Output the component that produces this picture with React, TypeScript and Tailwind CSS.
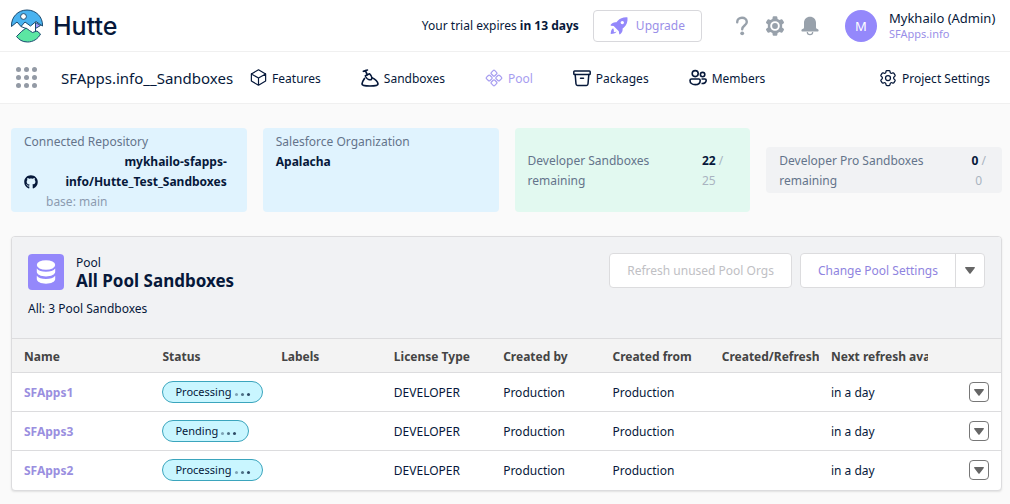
import type { ReactNode } from "react";
import { FaGithub } from "react-icons/fa";
import { HiOutlineCog6Tooth, HiOutlineCube } from "react-icons/hi2";

type Sandbox = { name: string; status: string };

const sandboxes: Sandbox[] = [
  { name: "SFApps1", status: "Processing" },
  { name: "SFApps3", status: "Pending" },
  { name: "SFApps2", status: "Processing" },
];

const columns = [
  { label: "Name", width: "w-[14%]" },
  { label: "Status", width: "w-[12%]" },
  { label: "Labels", width: "w-[11.4%]" },
  { label: "License Type", width: "w-[11.05%]" },
  { label: "Created by", width: "w-[11.05%]" },
  { label: "Created from", width: "w-[11.05%]" },
  { label: "Created/Refreshed", width: "w-[11.05%]" },
  { label: "Next refresh available", width: "w-[11.05%]" },
];

function Logo() {
  return (
    <svg width="34" height="34" viewBox="0 0 34 34" fill="none" stroke="#1a4a70" strokeWidth="1" strokeLinejoin="round">
      <path d="M1.500 17.500C1 8 8 1 17 1s16 7 15.500 16L26 12.500 20.500 17l-5.500-4-4 4.500-4-4.500Z" fill="#4ab3f0" />
      <path d="M6.500 27.500 11.500 22.500 16 19l3.500 2.500 3 2 4.500-1.500 3.500 3C28 30 23 33 17.500 33S9 30.500 6.500 27.500Z" fill="#5ce6a3" />
      <path d="m11 17.500 5 2M25.500 22V14" />
      <path d="m25.500 13.500 5 3-5 3Z" fill="#a49aff" />
      <circle cx="13.500" cy="7.500" r="2.900" fill="#fff" />
    </svg>
  );
}

function RocketIcon() {
  return (
    <svg width="18" height="18" viewBox="0 0 18 18" fill="currentColor">
      <path fillRule="evenodd" d="M17.500.4c.3 4.200-.8 7.500-3.600 10.100l-1.300 1.100c.2 2.500-.5 4.400-2.500 5.700-.5.300-.8 0-.9-.5l-.4-2.600-5.100-5.100L1.100 8.700c-.5-.1-.7-.5-.4-.9 1.300-2 3.200-2.800 5.700-2.500l1.100-1.300C10.100 1.200 13.300.100 17.500.400ZM12.300 3.900a1.700 1.700 0 1 0 0 3.400 1.700 1.700 0 0 0 0-3.400Z" />
      <path d="M3.200 11.300c-1.700.6-2.400 2.700-2.500 5.800 3.200-.1 5.300-.8 5.900-2.500-.9.500-1.900.6-2.800.6.100-1 .2-2-.6-3.900Z" />
    </svg>
  );
}

function QuestionIcon() {
  return (
    <svg width="14" height="20" viewBox="0 0 14 20" fill="none">
      <path d="M2.200 6.200C2.200 3.400 4.300 1.700 7 1.700s4.800 1.700 4.800 4.200c0 3.600-4.600 3.500-4.600 7.300" stroke="currentColor" strokeWidth="2.400" strokeLinecap="round" />
      <circle cx="7.200" cy="17.300" r="1.900" fill="currentColor" />
    </svg>
  );
}

function GearIcon() {
  return (
    <svg width="20" height="20" viewBox="0 0 20 20" fill="currentColor">
      <path
        fillRule="evenodd"
        d="M8.600.2h2.800c.5 0 .8.300.9.800l.3 2c.7.200 1.300.6 1.900 1l1.900-.7c.4-.2.900 0 1.100.4l1.400 2.400c.2.400.1.900-.2 1.200l-1.600 1.300c.1.900.1 1.900 0 2.800l1.600 1.300c.3.300.4.800.2 1.200l-1.400 2.400c-.2.400-.7.600-1.100.4l-1.900-.7c-.6.400-1.200.8-1.900 1l-.3 2c-.1.500-.4.800-.9.800H8.600c-.5 0-.8-.3-.9-.8l-.3-2c-.7-.2-1.300-.6-1.900-1l-1.900.7c-.4.200-.9 0-1.100-.4l-1.400-2.400c-.2-.4-.1-.9.200-1.200l1.600-1.300c-.1-.9-.1-1.900 0-2.800L1.300 7.300c-.3-.3-.4-.8-.2-1.200l1.400-2.400c.2-.4.700-.6 1.100-.4l1.900.7c.6-.4 1.200-.8 1.900-1l.3-2c.1-.5.4-.8.9-.8ZM10 5.200a4.800 4.800 0 1 0 0 9.600 4.800 4.800 0 0 0 0-9.600Z"
      />
      <circle cx="10" cy="10" r="2.900" />
    </svg>
  );
}

function BellIcon() {
  return (
    <svg width="18" height="20" viewBox="0 0 18 20" fill="currentColor">
      <path d="M9 .8c3.500 0 6 2.600 6 6v4.400c0 1 .5 1.500 1.500 1.900.7.300 1.100.7 1.100 1.300 0 .700-.4 1-1.100 1h-15c-.7 0-1.100-.3-1.100-1 0-.6.400-1 1.100-1.300 1-.4 1.500-.9 1.500-1.900V6.800c0-3.400 2.500-6 6-6Z" />
      <path d="M6.300 16a2.700 2.700 0 0 0 5.400 0" fill="none" stroke="currentColor" strokeWidth="1.200" />
    </svg>
  );
}

function SandboxIcon() {
  return (
    <svg width="18" height="18" viewBox="0 0 18 18" fill="none" stroke="currentColor" strokeWidth="1.700" strokeLinecap="round" strokeLinejoin="round">
      <path d="M3.500 9.500C1.700 12 1 13.800 1 15c0 1.400 3.300 2 8 2s8-.6 8-2c0-2.100-2.900-5.200-6-6.200" />
      <path d="m2.400 2.300 4-1.300M4.400 1.700l1.800 4" />
      <path d="m4.300 6.800 4.300-2c1.700 1.600 2.500 3.600 1.900 5.700-2.100.7-4.700-.6-5.700-2.500Z" strokeWidth="1.500" />
    </svg>
  );
}

function PoolIcon() {
  return (
    <svg width="18" height="18" viewBox="0 0 18 18" fill="none" stroke="currentColor" strokeWidth="1.200" strokeLinejoin="round">
      <rect x="6.600" y="1.800" width="4.800" height="4.800" rx="1.200" transform="rotate(45 9 4.200)" />
      <rect x="6.600" y="11.400" width="4.800" height="4.800" rx="1.200" transform="rotate(45 9 13.800)" />
      <rect x="1.800" y="6.600" width="4.800" height="4.800" rx="1.200" transform="rotate(45 4.200 9)" />
      <rect x="11.400" y="6.600" width="4.800" height="4.800" rx="1.200" transform="rotate(45 13.800 9)" />
    </svg>
  );
}

function PackagesIcon() {
  return (
    <svg width="18" height="18" viewBox="0 0 18 18" fill="none" stroke="currentColor" strokeWidth="1.500" strokeLinecap="round" strokeLinejoin="round">
      <rect x="0.800" y="2" width="16.400" height="3.600" rx="0.800" />
      <path d="M2.200 5.600 3 15c.1.900.6 1.400 1.500 1.400h9c.9 0 1.400-.5 1.500-1.400l.8-9.400M7.500 9.200h3" />
    </svg>
  );
}

function MembersIcon() {
  return (
    <svg width="18" height="18" viewBox="0 0 18 18" fill="none" stroke="currentColor" strokeWidth="1.600" strokeLinejoin="round">
      <circle cx="6.200" cy="4.600" r="3" />
      <circle cx="13.600" cy="5.600" r="2.200" />
      <path d="M2.500 10h7.300c.9 0 1.400.6 1.400 1.400 0 2.600-1.900 4.200-5 4.200S1 14 1 11.400C1 10.600 1.600 10 2.500 10Z" />
      <path d="M12.500 10H16c.7 0 1.200.500 1.200 1.200 0 2.200-1.600 3.500-4.700 3.300" />
    </svg>
  );
}

function DatabaseIcon() {
  return (
    <svg width="20" height="24" viewBox="0 0 20 24" fill="#fff">
      <ellipse cx="10" cy="5" rx="9.200" ry="4.800" />
      <path d="M.8 8.400c1.600 2.200 5 3.300 9.200 3.300s7.600-1.100 9.200-3.300v3.300c0 2.700-4 4.700-9.200 4.700S.8 14.400.8 11.700Z" />
      <path d="M.8 15.700C2.400 17.900 5.800 19 10 19s7.600-1.100 9.200-3.300v3.300c0 2.700-4 4.700-9.200 4.700S.8 21.700.8 19Z" />
    </svg>
  );
}

function Caret() {
  return (
    <svg width="10" height="7" viewBox="0 0 10 7" fill="#666">
      <path d="M.7 0h8.600c.6 0 .8.600.5 1L5.600 6.500c-.3.400-.9.400-1.200 0L.2 1C-.1.600.1 0 .7 0Z" />
    </svg>
  );
}

function NavItem({ icon, label, active }: { icon: ReactNode; label: string; active?: boolean }) {
  return (
    <a href="#" className={`flex items-center gap-1 whitespace-nowrap ${active ? "text-[#a79df0]" : ""}`}>
      <span className="flex w-5 justify-center">{icon}</span>
      <span className="pt-0.5">{label}</span>
    </a>
  );
}

function StatusPill({ status }: { status: string }) {
  return (
    <span className="flex h-[22px] w-fit items-center rounded-full border border-[#3ba5bd] bg-[#c9f6ff] px-3 text-[11px]">
      {status}
      <span className="mt-1 ml-[3px] flex gap-[3px]">
        <span className="size-[3px] rounded-full bg-[#7ea3b5]" />
        <span className="size-[3px] rounded-full bg-[#4f7186]" />
        <span className="size-[3px] rounded-full bg-[#2f4c66]" />
      </span>
    </span>
  );
}

export default function App() {
  return (
    <div className="min-h-screen bg-[#fafafa] font-['Noto_Sans',sans-serif] text-[12px] leading-5 text-[#06183a]">
      {/* Top bar */}
      <header className="flex h-[52px] items-center border-b border-[#f0f0f0] bg-white pr-3 pl-[10px]">
        <a href="#" className="flex items-center gap-[9px] font-['Inter',sans-serif] text-[25px] font-medium">
          <Logo />
          Hutte
        </a>
        <p className="ml-auto">
          Your trial expires <b>in 13 days</b>
        </p>
        <button className="ml-[14px] flex h-8 items-center gap-2 rounded border border-[#d8d8dc] bg-white px-4 text-[#9a8fe8]">
          <span className="text-[#9488fb]"><RocketIcon /></span>
          Upgrade
        </button>
        <div className="ml-[33px] flex items-center gap-4 text-[#98a1ab]">
          <button aria-label="Help"><QuestionIcon /></button>
          <button aria-label="Settings"><GearIcon /></button>
          <button aria-label="Notifications"><BellIcon /></button>
        </div>
        <div className="ml-[26px] flex size-8 items-center justify-center rounded-full bg-[#9488fb] text-[13px] text-white">M</div>
        <div className="ml-3 w-[109px] whitespace-nowrap">
          <div className="text-[13px] leading-4">Mykhailo (Admin)</div>
          <a href="#" className="block text-[11px] leading-4 text-[#9a8fe8]">SFApps.info</a>
        </div>
      </header>

      {/* Project navigation */}
      <nav className="flex h-[52px] items-center border-b border-[#f0f0f0] bg-white pr-5 pl-4">
        <button aria-label="Projects" className="grid grid-cols-3 gap-[3px]">
          {Array.from({ length: 9 }, (_, i) => (
            <span key={i} className="size-[5px] rounded-full bg-[#939aa5]" />
          ))}
        </button>
        <span className="ml-6 text-[15px]">SFApps.info__Sandboxes</span>
        <div className="ml-[15px] flex gap-[39px]">
          <NavItem icon={<HiOutlineCube size={19} />} label="Features" />
          <NavItem icon={<SandboxIcon />} label="Sandboxes" />
          <NavItem icon={<PoolIcon />} label="Pool" active />
          <NavItem icon={<PackagesIcon />} label="Packages" />
          <NavItem icon={<MembersIcon />} label="Members" />
        </div>
        <div className="ml-auto">
          <NavItem icon={<HiOutlineCog6Tooth size={20} />} label="Project Settings" />
        </div>
      </nav>

      <main className="pt-6 pr-2 pl-[11px]">
        <div className="grid grid-cols-4 gap-4">
          <section className="rounded bg-[#e0f3fe] pt-1 pr-5 pl-[13px]">
            <h2 className="text-[#64748b]">Connected Repository</h2>
            <div className="flex items-center gap-2">
              <FaGithub size={14} className="shrink-0" />
              <div className="flex-1">
                <a href="#" className="block text-right font-bold">mykhailo-sfapps-info/Hutte_Test_Sandboxes</a>
                <p className="text-[#8c9bb0]">base: main</p>
              </div>
            </div>
          </section>
          <section className="rounded bg-[#e0f3fe] px-[13px] pt-1">
            <h2 className="text-[#64748b]">Salesforce Organization</h2>
            <p className="font-bold">Apalacha</p>
          </section>
          <section className="flex items-center justify-between rounded bg-[#e2f9f0] px-[13px] pt-0.5">
            <p className="w-32 text-[#64748b]">Developer Sandboxes remaining</p>
            <p className="mr-[14px] text-[#a9b4c0]">
              <b className="text-[#06183a]">22</b> /<br />25
            </p>
          </section>
          <section className="flex items-center justify-between self-center rounded bg-[#f1f2f4] pt-1 pr-4 pb-0.5 pl-[13px]">
            <p className="text-[#64748b]">Developer Pro Sandboxes remaining</p>
            <p className="shrink-0 text-center text-[#a9b4c0]">
              <b className="text-[#06183a]">0</b> /<br />0
            </p>
          </section>
        </div>

        {/* Pool list */}
        <section className="mt-6 overflow-hidden rounded border border-[#dcdcde] bg-white shadow-[0_1px_2px_rgba(0,0,0,0.1)]">
          <div className="flex h-[101px] items-start justify-between bg-[#f1f2f4] p-4">
            <div>
              <div className="flex items-center gap-3">
                <span className="flex size-9 items-center justify-center rounded bg-[#9488fb]">
                  <DatabaseIcon />
                </span>
                <div className="pt-0.5">
                  <p className="leading-4">Pool</p>
                  <h1 className="text-[17px] leading-5 font-bold">All Pool Sandboxes</h1>
                </div>
              </div>
              <p className="mt-2">All: 3 Pool Sandboxes</p>
            </div>
            <div className="flex gap-2">
              <button disabled className="h-[35px] rounded border border-[#dcdcde] bg-white px-[17px] text-[#c0c0c4]">
                Refresh unused Pool Orgs
              </button>
              <div className="flex h-[35px] divide-x divide-[#dcdcde] rounded border border-[#dcdcde] bg-white">
                <button className="px-[17px] text-[#8f84e0]">Change Pool Settings</button>
                <button aria-label="More actions" className="flex w-7 items-center justify-center"><Caret /></button>
              </div>
            </div>
          </div>

          <table className="w-full table-fixed">
            <thead>
              <tr className="h-[34px] border-y border-[#dcdcde] bg-[#f3f3f3] text-left text-[#444]">
                {columns.map((col) => (
                  <th key={col.label} className={`${col.width} pt-0.5 pl-3 font-bold`}>
                    <div className="overflow-hidden whitespace-nowrap">{col.label}</div>
                  </th>
                ))}
                <td />
              </tr>
            </thead>
            <tbody>
              {sandboxes.map((s) => (
                <tr key={s.name} className="h-[39px] border-b border-[#dcdcde] last:border-b-0">
                  <td className="pt-0.5 pl-3">
                    <a href="#" className="font-bold text-[#9a8fe0]">{s.name}</a>
                  </td>
                  <td className="pl-3"><StatusPill status={s.status} /></td>
                  <td />
                  <td className="pt-0.5 pl-3">DEVELOPER</td>
                  <td className="pt-0.5 pl-3">Production</td>
                  <td className="pt-0.5 pl-3">Production</td>
                  <td />
                  <td className="pt-0.5 pl-3">in a day</td>
                  <td className="pr-3">
                    <button aria-label={`Actions for ${s.name}`} className="ml-auto flex size-5 items-center justify-center rounded border border-[#777]">
                      <Caret />
                    </button>
                  </td>
                </tr>
              ))}
            </tbody>
          </table>
        </section>
      </main>
    </div>
  );
}
